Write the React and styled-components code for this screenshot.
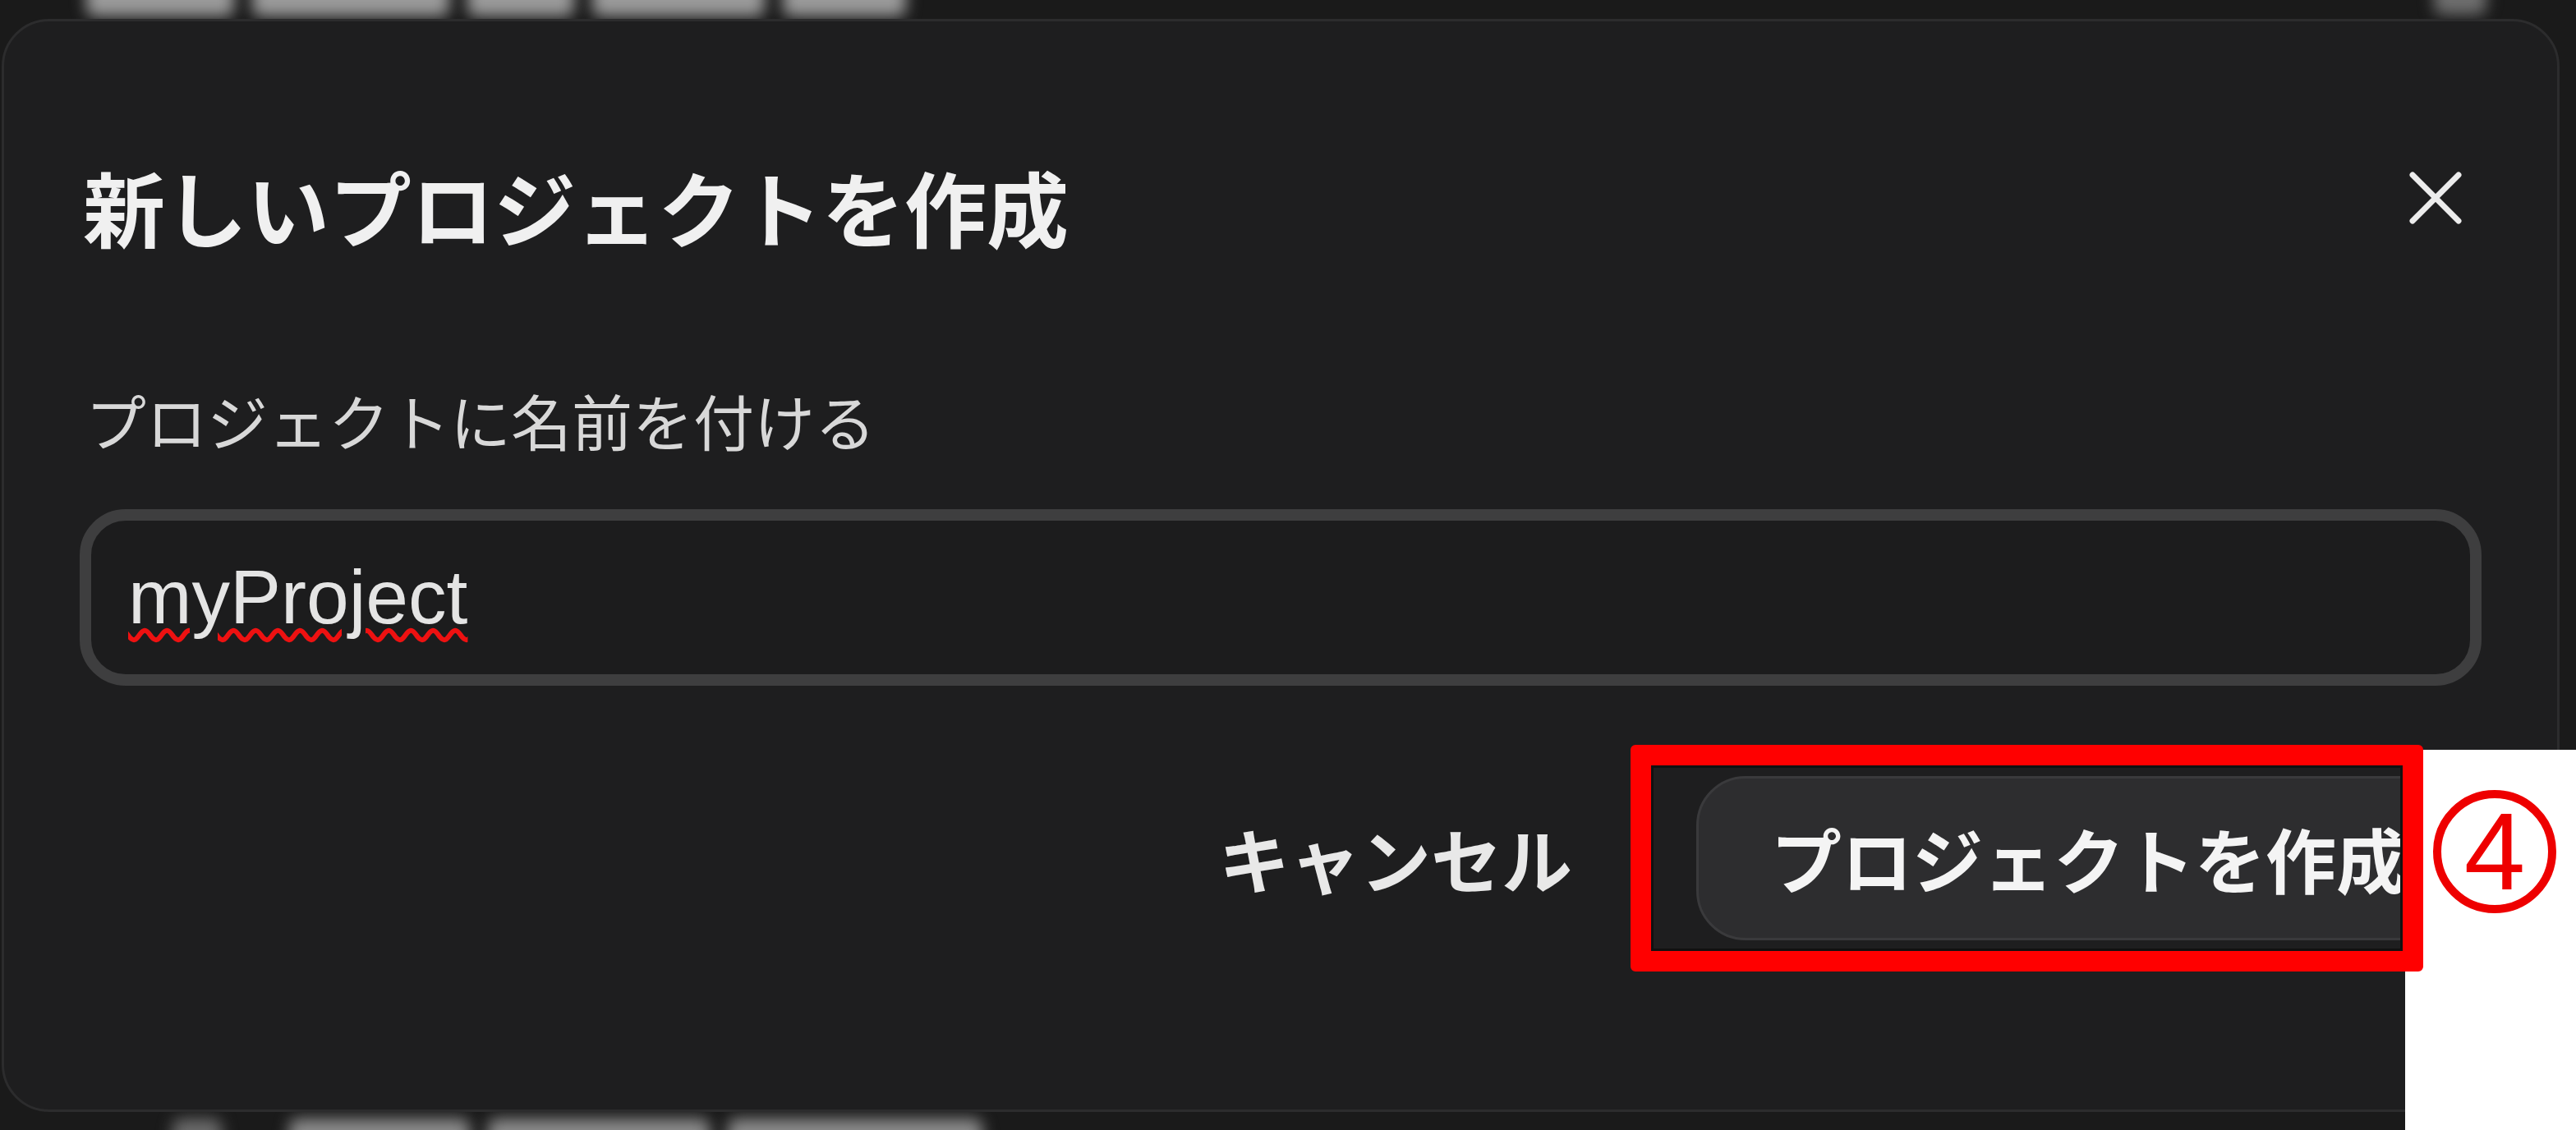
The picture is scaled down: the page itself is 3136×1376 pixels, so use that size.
import React from 'react';
import styled, { createGlobalStyle } from 'styled-components';

const GlobalStyle = createGlobalStyle`
  html, body {
    margin: 0;
    padding: 0;
    background: #1a1a1a;
  }
  body {
    width: 3136px;
    height: 1376px;
    overflow: hidden;
    font-family: "Noto Sans CJK JP", "Noto Sans", sans-serif;
  }
  * { box-sizing: border-box; }
`;

const jp = `"Noto Sans CJK JP", "Noto Sans", sans-serif`;

const Page = styled.div`
  position: relative;
  width: 3136px;
  height: 1376px;
  display: flex;
  flex-direction: column;
  background: #1a1a1a;
  overflow: hidden;
`;

const BackdropStrip = styled.div`
  flex: none;
  height: ${p => p.$h}px;
  display: flex;
  align-items: flex-start;
  gap: 22px;
  padding-left: ${p => p.$pl}px;
  overflow: hidden;
`;

const BlurredBar = styled.span`
  flex: none;
  width: ${p => p.$w}px;
  height: 44px;
  margin-left: ${p => p.$ml || 0}px;
  margin-top: ${p => p.$mt || 0}px;
  border-radius: 10px;
  background: ${p => p.$c || '#9a9a9a'};
  filter: blur(9px);
`;

const Dialog = styled.section`
  flex: none;
  margin-left: 2px;
  width: 3114px;
  height: 1331px;
  background: #1e1e1f;
  border: 3px solid #2c2c2d;
  border-radius: 58px;
  padding: 160px 92px 0 92px;
  display: flex;
  flex-direction: column;
`;

const Header = styled.header`
  display: flex;
  justify-content: space-between;
  align-items: flex-start;
`;

const Title = styled.h2`
  margin: 0;
  padding-left: 4px;
  font-family: ${jp};
  font-size: 100px;
  line-height: 130px;
  font-weight: 700;
  color: #f0f0f0;
`;

const CloseButton = styled.button`
  width: 66px;
  height: 66px;
  margin: 22px 23px 0 0;
  padding: 0;
  border: 0;
  background: transparent;
  display: flex;
  svg { display: block; }
`;

const FieldLabel = styled.label`
  margin-top: 145px;
  padding-left: 7px;
  font-family: ${jp};
  font-size: 74px;
  line-height: 100px;
  font-weight: 400;
  color: #d8d8d8;
`;

const TextField = styled.div`
  margin-top: 59px;
  height: 215px;
  border: 14px solid #3e3e3f;
  border-radius: 56px;
  background: #1c1c1d;
  padding-left: 45px;
  display: flex;
  align-items: center;
  font-family: "Liberation Sans", Arial, sans-serif;
  font-size: 93px;
  line-height: 187px;
  color: #e4e4e4;
`;

const Misspelled = styled.span`
  text-decoration-line: underline;
  text-decoration-style: wavy;
  text-decoration-color: #ee1111;
  text-decoration-thickness: 6px;
  text-underline-offset: 7px;
`;

const Footer = styled.footer`
  margin-top: 110px;
  display: flex;
  justify-content: flex-end;
  align-items: center;
  gap: 151px;
`;

const TextButton = styled.button`
  padding: 0;
  border: 0;
  background: transparent;
  font-family: ${jp};
  font-size: 86px;
  font-weight: 700;
  line-height: 200px;
  color: #e8e8e8;
`;

const PrimaryButton = styled.button`
  height: 200px;
  padding: 0 88px;
  border: 3px solid #3a3a3c;
  border-radius: 60px;
  background: #2d2d2f;
  font-family: ${jp};
  font-size: 86px;
  font-weight: 700;
  line-height: 1;
  color: #f4f4f4;
  white-space: nowrap;
`;

/* annotation overlays drawn on top of the screenshot */
const WhiteMask = styled.div`
  position: absolute;
  left: 2928px;
  top: 913px;
  right: 0;
  bottom: 0;
  background: #ffffff;
`;

const HighlightBox = styled.div`
  position: absolute;
  left: 1985px;
  top: 907px;
  width: 965px;
  height: 276px;
  border: 25px solid #ff0000;
  border-radius: 6px;
  box-shadow: inset 0 0 0 3px #111111;
`;

const StepBadge = styled.div`
  position: absolute;
  left: 2962px;
  top: 962px;
  width: 150px;
  height: 150px;
  border: 10px solid #ee0000;
  border-radius: 50%;
  display: flex;
  align-items: center;
  justify-content: center;
  font-family: "Liberation Sans", Arial, sans-serif;
  font-size: 134px;
  line-height: 1;
  color: #ee0000;
`;

export default function App() {
  return (
    <>
      <GlobalStyle />
      <Page>
        <BackdropStrip $h={23} $pl={105}>
          <BlurredBar $w={180} $mt={-24} />
          <BlurredBar $w={240} $mt={-24} />
          <BlurredBar $w={130} $mt={-24} />
          <BlurredBar $w={210} $mt={-24} />
          <BlurredBar $w={150} $mt={-24} />
          <BlurredBar $w={64} $mt={-26} $ml={1838} $c="#6e6e6e" />
        </BackdropStrip>
        <Dialog>
          <Header>
            <Title>新しいプロジェクトを作成</Title>
            <CloseButton aria-label="閉じる">
              <svg width="66" height="66" viewBox="0 0 66 66">
                <path
                  d="M5 5 L61 61 M61 5 L5 61"
                  stroke="#ececec"
                  strokeWidth="7"
                  strokeLinecap="round"
                  fill="none"
                />
              </svg>
            </CloseButton>
          </Header>
          <FieldLabel>プロジェクトに名前を付ける</FieldLabel>
          <TextField>
            <Misspelled>myProject</Misspelled>
          </TextField>
          <Footer>
            <TextButton>キャンセル</TextButton>
            <PrimaryButton>プロジェクトを作成</PrimaryButton>
          </Footer>
        </Dialog>
        <BackdropStrip $h={22} $pl={210}>
          <BlurredBar $w={60} $mt={8} $c="#6a6a6a" />
          <BlurredBar $w={220} $mt={8} $c="#8a8a8a" $ml={60} />
          <BlurredBar $w={270} $mt={8} $c="#8a8a8a" />
          <BlurredBar $w={310} $mt={8} $c="#8a8a8a" />
        </BackdropStrip>
        <WhiteMask />
        <HighlightBox />
        <StepBadge>4</StepBadge>
      </Page>
    </>
  );
}
